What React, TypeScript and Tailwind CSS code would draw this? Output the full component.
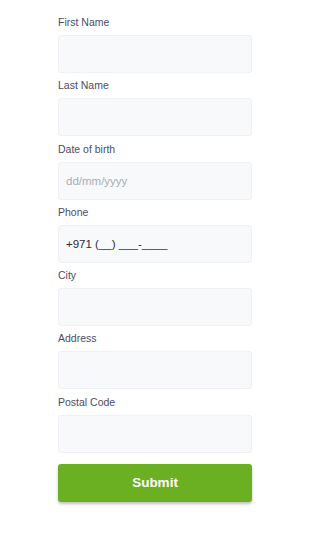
import React from 'react';

const FIELDS = [
  { label: 'First Name', placeholder: '' },
  { label: 'Last Name', placeholder: '' },
  { label: 'Date of birth', placeholder: 'dd/mm/yyyy' },
  { label: 'Phone', value: '+971 (__) ___-____' },
  { label: 'City', placeholder: '' },
  { label: 'Address', placeholder: '' },
  { label: 'Postal Code', placeholder: '' },
];

export default function App() {
  return (
    <div className="min-h-[550px] bg-white font-['Liberation_Sans',Arial,sans-serif]">
      <form className="mx-auto flex w-[194px] flex-col gap-[6.3px] pt-[16px]" onSubmit={(e) => e.preventDefault()}>
        {FIELDS.map((field) => (
          <label key={field.label} className="flex flex-col">
            <span className="mb-[7px] text-[10.5px] leading-[12px] text-[#4d4b66]">{field.label}</span>
            <input
              className="h-[38px] rounded-[3px] border border-[#eef0f4] bg-[#f8f9fb] px-[7px] text-[11.5px] text-[#2b2b3a] outline-none placeholder:text-[#a9abb3]"
              placeholder={field.placeholder}
              defaultValue={field.value}
            />
          </label>
        ))}
        <button
          type="submit"
          className="mt-[5px] h-[38px] rounded-[3px] bg-[#6bb023] text-[13.5px] font-bold text-white shadow-[0_2px_3px_rgba(0,0,0,0.25)]"
        >
          Submit
        </button>
      </form>
    </div>
  );
}
